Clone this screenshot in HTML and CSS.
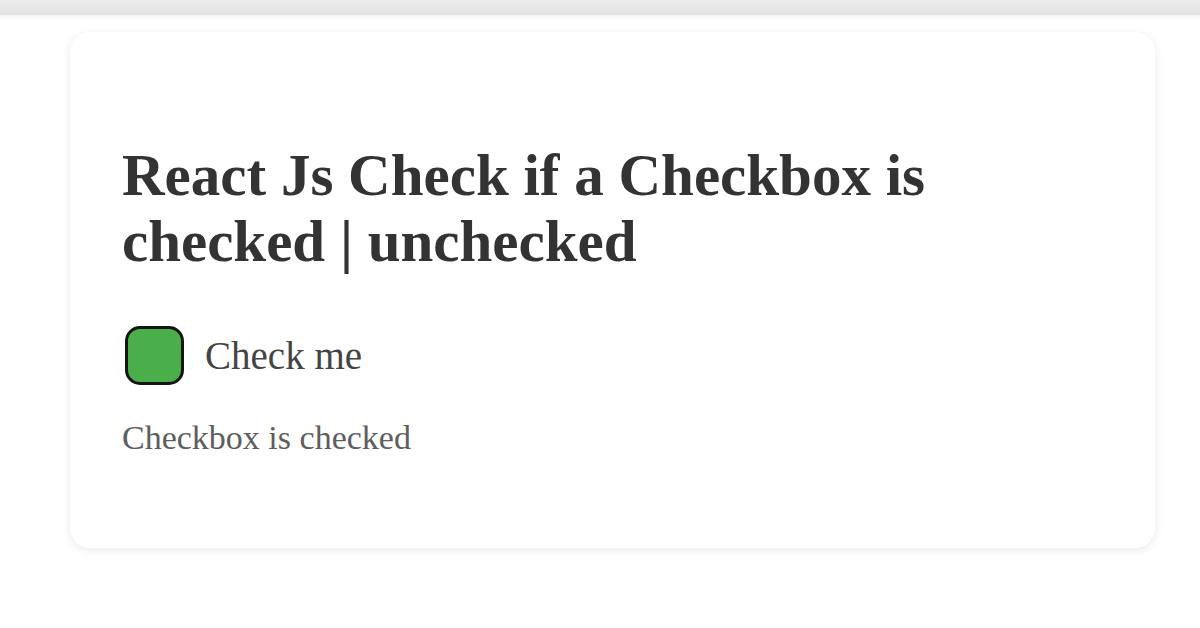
FILE: index.html
```html
<!DOCTYPE html>
<html lang="en">
<head>
<meta charset="utf-8">
<title>React Js Check if a Checkbox is checked | unchecked</title>
<link rel="stylesheet" href="styles.css">
</head>
<body>
<div class="topbar"></div>
<main class="card">
  <h1 class="title">React Js Check if a Checkbox is checked | unchecked</h1>
  <label class="check-row">
    <input class="box" type="checkbox" checked>
    <span class="check-label">Check me</span>
  </label>
  <p class="status">Checkbox is checked</p>
</main>
</body>
</html>
```

FILE: styles.css
```css
html, body {
  margin: 0;
  padding: 0;
  background: #ffffff;
}

body {
  width: 1200px;
  height: 628px;
  overflow: hidden;
  font-family: "Liberation Serif", "Times New Roman", serif;
}

.topbar {
  height: 15px;
  background: linear-gradient(#ececec, #e2e2e2);
  box-shadow: 0 2px 4px rgba(0, 0, 0, 0.06);
}

.card {
  box-sizing: border-box;
  margin: 17px 0 0 70px;
  width: 1085px;
  height: 516px;
  border-radius: 20px;
  background: #ffffff;
  box-shadow: 0 2px 10px rgba(0, 0, 0, 0.09);
  padding: 110px 52px 0 52px;
}

.title {
  margin: 0;
  font-size: 59px;
  font-weight: bold;
  line-height: 66px;
  color: #333333;
}

.check-row {
  display: flex;
  align-items: center;
  gap: 21px;
  margin-top: 52px;
  margin-left: 3px;
}

.box {
  appearance: none;
  -webkit-appearance: none;
  box-sizing: border-box;
  margin: 0;
  width: 59px;
  height: 59px;
  border: 3px solid #151515;
  border-radius: 15px;
  background: #4aae4a;
}

.check-label {
  font-size: 39px;
  line-height: 45px;
  color: #444444;
}

.status {
  margin: 34px 0 0 0;
  font-size: 34px;
  line-height: 38px;
  color: #5e5e5e;
}
```
